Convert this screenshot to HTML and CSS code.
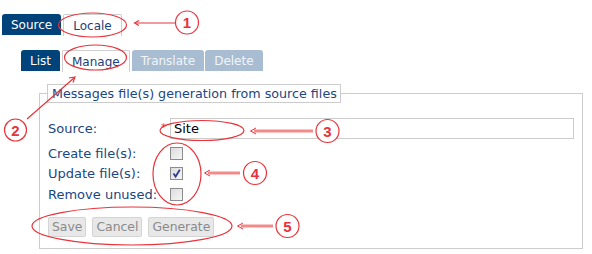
FILE: index.html
```html
<!DOCTYPE html>
<html lang="en">
<head>
    <meta charset="UTF-8">
    <title>Locale - Manage</title>
    <link rel="stylesheet" href="styles.css">
</head>
<body>

    <div class="page">
        <div class="tabs">
            <span class="tab tab-dark">Source</span>
            <span class="tab tab-open">Locale</span>
        </div>

        <div class="tabs sub-tabs">
            <span class="tab tab-dark">List</span>
            <span class="tab tab-open">Manage</span>
            <span class="tab tab-off">Translate</span>
            <span class="tab tab-off">Delete</span>
        </div>

        <fieldset class="box">
            <legend class="box-title">Messages file(s) generation from source files</legend>

            <div class="row row-source">
                <label class="row-label">Source:</label>
                <span class="required">*</span>
                <input class="text-input" type="text" value="Site">
            </div>

            <div class="row">
                <label class="row-label">Create file(s):</label>
                <span class="check"></span>
            </div>
            <div class="row">
                <label class="row-label">Update file(s):</label>
                <span class="check">
                    <svg width="11" height="11" viewBox="0 0 11 11"><path d="M2.5 5.5 L4.6 8.5 L8.8 1.8" fill="none" stroke="#2f3f8f" stroke-width="1.8"/></svg>
                </span>
            </div>
            <div class="row">
                <label class="row-label">Remove unused:</label>
                <span class="check"></span>
            </div>

            <div class="buttons">
                <button class="btn">Save</button>
                <button class="btn">Cancel</button>
                <button class="btn">Generate</button>
            </div>
        </fieldset>

        <!-- annotations drawn over the screenshot -->
        <svg class="notes" width="592" height="254" viewBox="0 0 592 254">
            <g fill="none" stroke="#e8333b" stroke-width="1.2">
                <ellipse cx="92.5" cy="25" rx="34" ry="12"/>
                <ellipse cx="95.5" cy="57.5" rx="31" ry="12.5"/>
                <ellipse cx="202" cy="130.5" rx="42" ry="10"/>
                <ellipse cx="177" cy="174" rx="24" ry="31"/>
                <ellipse cx="132" cy="226" rx="100" ry="19"/>
            </g>

            <g stroke="#e8333b" stroke-width="1.2" fill="none">
                <line x1="135" y1="23" x2="175" y2="23"/>
                <path d="M139 20.5 L134.5 23 L139 25.5"/>
                <line x1="27" y1="119" x2="74" y2="78"/>
                <path d="M69 78 L75 77 L73 82.5"/>
            </g>

            <g stroke="#f28a8a" stroke-width="3" fill="none">
                <line x1="254" y1="131" x2="313" y2="131"/>
                <line x1="208" y1="173" x2="240" y2="173"/>
                <line x1="241" y1="226" x2="273" y2="226"/>
            </g>
            <g stroke="#e8333b" stroke-width="1" fill="none">
                <path d="M256 128 L250.5 131 L256 134"/>
                <path d="M210 170 L204.5 173 L210 176"/>
                <path d="M243 223 L237.5 226 L243 229"/>
            </g>

            <g fill="#fff" stroke="#e8333b" stroke-width="1.2">
                <circle cx="187" cy="22.5" r="11.5"/>
                <circle cx="15.5" cy="130" r="11"/>
                <circle cx="327.5" cy="131" r="11.5"/>
                <circle cx="255" cy="173" r="11.5"/>
                <circle cx="287.5" cy="226" r="11.5"/>
            </g>
            <g class="note-num" fill="#e8333b" text-anchor="middle">
                <text x="187" y="28">1</text>
                <text x="15.5" y="135.5">2</text>
                <text x="327.5" y="136.5">3</text>
                <text x="255" y="178.5">4</text>
                <text x="287.5" y="231.5">5</text>
            </g>
        </svg>
    </div>

</body>
</html>
```

FILE: styles.css
```css
body {
    margin: 0;
    padding: 0;
    background: #fff;
    font-family: "DejaVu Sans", Verdana, sans-serif;
    font-size: 13px;
    color: #1b4680;
}

.page {
    position: relative;
    width: 592px;
    height: 254px;
    overflow: hidden;
}

.tabs {
    display: flex;
    padding: 14px 0 0 2px;
    height: 21px;
    font-size: 12px;
}

.sub-tabs {
    padding: 15px 0 0 21px;
}

.tab {
    display: flex;
    align-items: center;
    justify-content: center;
    height: 21px;
    box-sizing: border-box;
    padding: 0 9px;
    border-radius: 3px 3px 0 0;
    margin-right: 1px;
}

.tab-dark {
    background: #00427a;
    color: #fff;
}

.tab-open {
    background: #fff;
    border: 1px solid #cfcfcf;
    border-bottom: none;
    color: #1d3f7a;
    height: 22px;
    margin: 0 2px 0 1px;
    border-radius: 2px 2px 0 0;
}

.tab-off {
    background: #a8bdd1;
    color: #f2f5f8;
}

.box {
    margin: 13px 0 0 39px;
    width: 544px;
    box-sizing: border-box;
    border: 1px solid #cccccc;
    padding: 0 8px 11px 8px;
    height: 165px;
}

.box-title {
    border: 1px solid #cccccc;
    padding: 1px 3px 1px 4px;
    margin-left: -1px;
    line-height: 15px;
    font-size: 12.7px;
    color: #1b4680;
}

.row {
    display: flex;
    align-items: center;
    height: 20.5px;
}

.row-source {
    height: 21px;
    margin: 15px 0 4px 0;
    position: relative;
}

.row-label {
    width: 122px;
    flex-shrink: 0;
}

.required {
    position: absolute;
    left: 113px;
    top: 4px;
    color: #e8333b;
    font-size: 10px;
}

.text-input {
    flex: 1;
    height: 21px;
    box-sizing: border-box;
    border: 1px solid #cccccc;
    padding: 0 3px;
    font-family: "DejaVu Sans", Verdana, sans-serif;
    font-size: 13px;
    color: #000;
    outline: none;
}

.check {
    display: flex;
    align-items: center;
    justify-content: center;
    width: 13px;
    height: 13px;
    box-sizing: border-box;
    border: 1px solid #8c8c8c;
    background: linear-gradient(135deg, #dcdcdc, #f6f6f6);
}

.buttons {
    display: flex;
    gap: 6px;
    margin-top: 12px;
}

.btn {
    height: 20px;
    box-sizing: border-box;
    padding: 0 3px;
    border: 1px solid #d4d4d4;
    border-radius: 2px;
    background: #e8e8e8;
    color: #8a8a8a;
    font-family: "DejaVu Sans", Verdana, sans-serif;
    font-size: 12.4px;
}

.notes {
    position: absolute;
    left: 0;
    top: 0;
}

.note-num {
    font-family: "Liberation Sans", Arial, sans-serif;
    font-weight: bold;
    font-size: 15px;
}
```
